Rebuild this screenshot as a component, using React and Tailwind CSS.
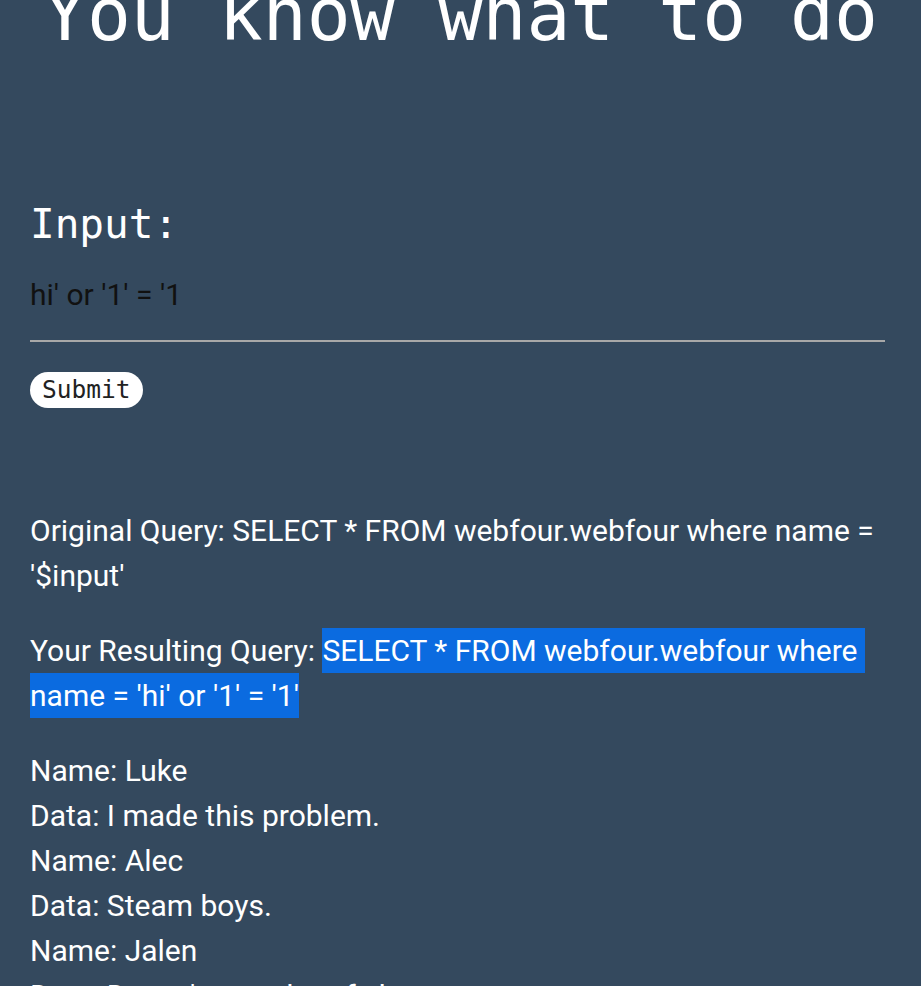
import { useState } from "react";

const rows = [
  ["Name", "Luke"],
  ["Data", "I made this problem."],
  ["Name", "Alec"],
  ["Data", "Steam boys."],
  ["Name", "Jalen"],
  ["Data", "Doesn't get a lot of sleep."],
  ["Name", "Sam"],
  ["Data", "Likes to code."],
];

export default function App() {
  const [input, setInput] = useState("hi' or '1' = '1");

  return (
    <div className="min-h-screen bg-[#34495e] overflow-hidden text-white">
      <h1 className="mt-[-21px] text-center text-[73px] leading-[72px] font-normal font-['DejaVu_Sans_Mono',monospace]">
        You know what to do
      </h1>

      <div className="pl-[30px] pr-[36px] font-['Roboto',sans-serif]">
        <h2 className="mt-[150px] text-[41px] leading-[47px] font-normal font-['DejaVu_Sans_Mono',monospace]">
          Input:
        </h2>

        <input
          className="mt-[22px] block w-full h-[72px] pt-[7px] pb-[28px] text-[30px] leading-[35px] text-[#111] bg-transparent border-b-2 border-[#a8a8a8] outline-none"
          value={input}
          onChange={(e) => setInput(e.target.value)}
        />

        <button className="mt-[30px] block h-[36px] px-[12px] rounded-full bg-white text-[#222] text-[24.5px] leading-[28px] font-['DejaVu_Sans_Mono',monospace]">
          Submit
        </button>

        <div className="mt-[100px] text-[30px] leading-[45px]">
          <p className="mb-[30px]">
            Original Query: SELECT * FROM webfour.webfour where name = '$input'
          </p>
          <p className="mb-[30px]">
            Your Resulting Query:{" "}
            <span className="bg-[#0b6be0] py-[5px] whitespace-break-spaces">
              {"SELECT * FROM webfour.webfour where name = 'hi' or '1' = '1'"}
            </span>
          </p>
          <div>
            {rows.map(([k, v], i) => (
              <div key={i}>
                {k}: {v}
              </div>
            ))}
          </div>
        </div>
      </div>
    </div>
  );
}
